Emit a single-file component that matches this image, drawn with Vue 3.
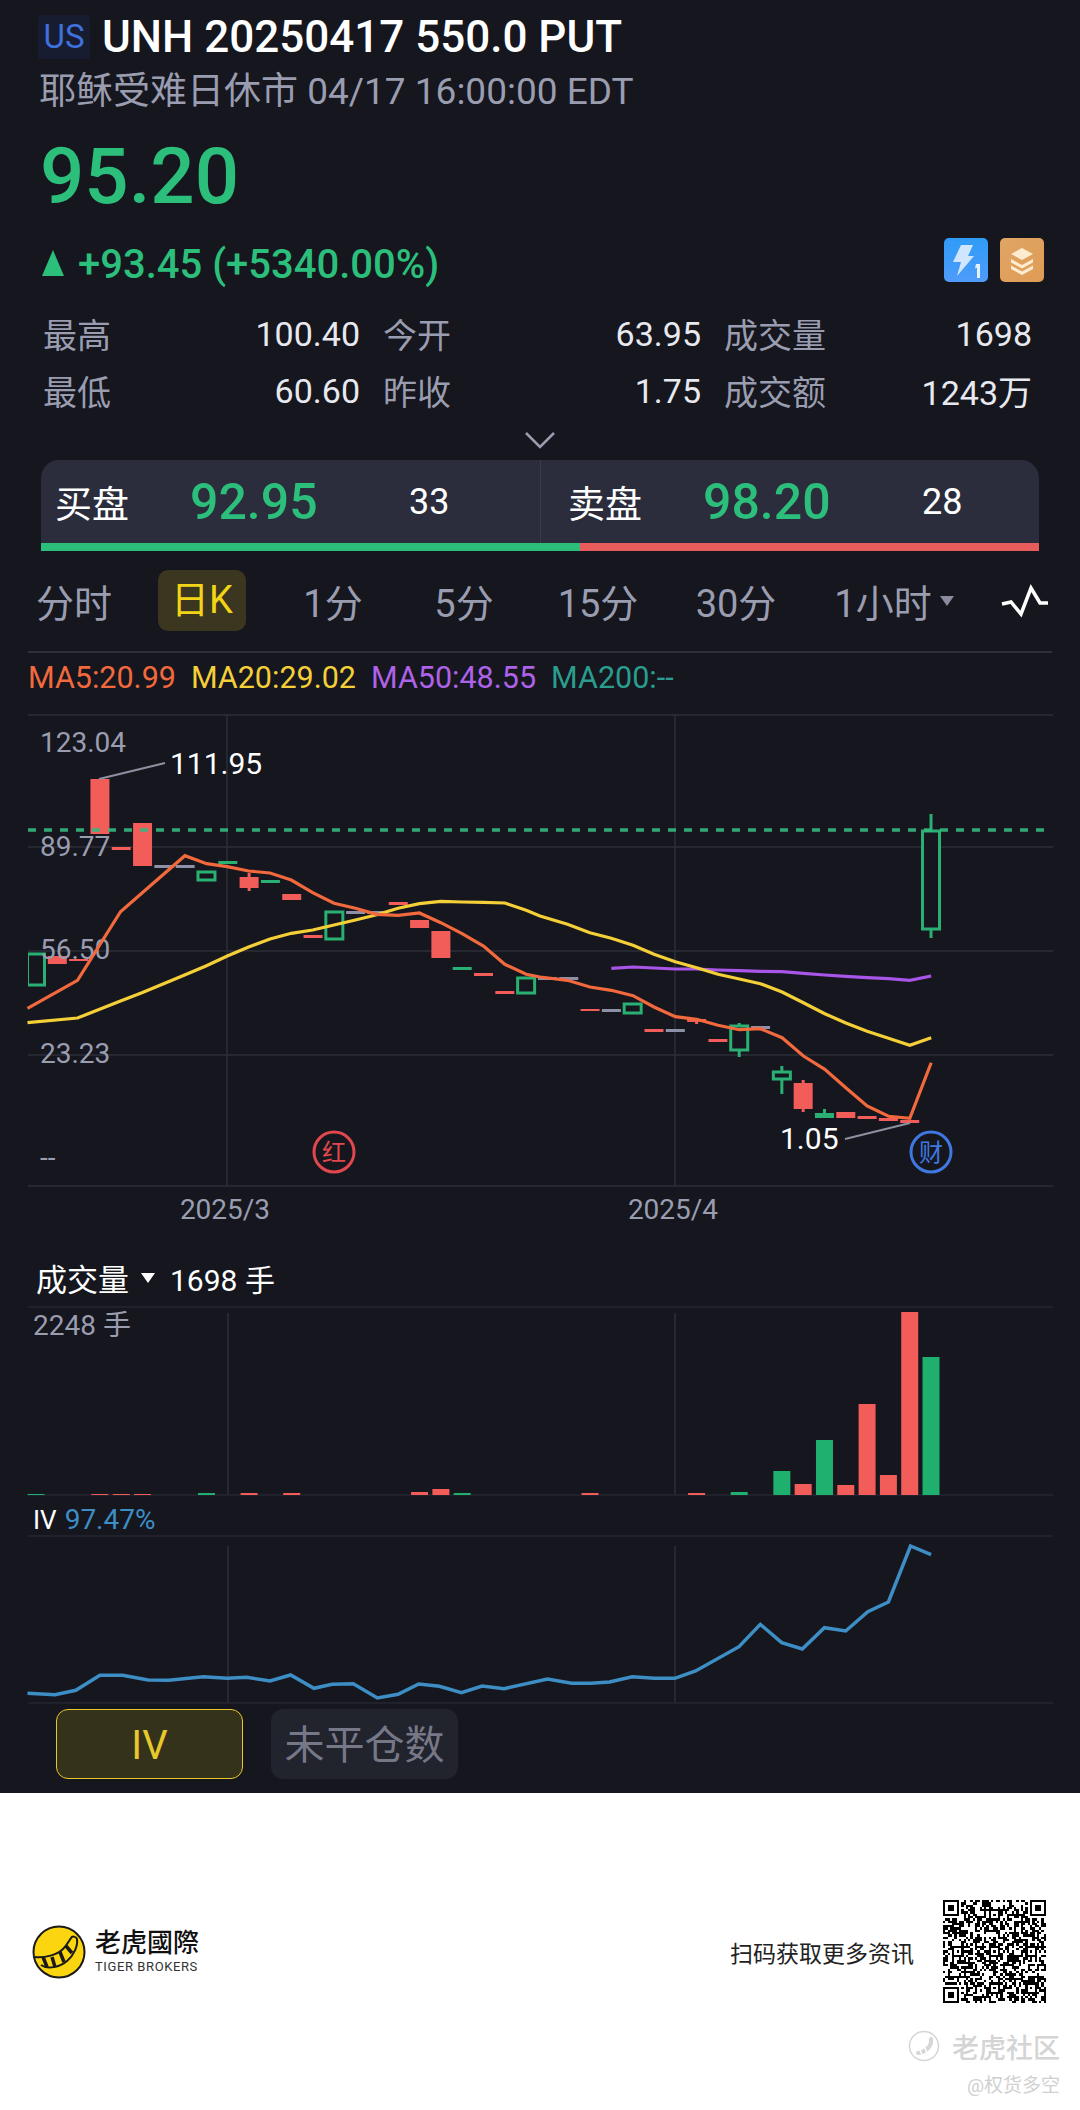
<template>
  <div class="page">
    <div class="dark">
      <!-- ---------- Header ---------- -->
      <div class="title-row">
        <span class="market">US</span>
        <span class="title">UNH 20250417 550.0 PUT</span>
      </div>
      <div class="sub">耶稣受难日休市 04/17 16:00:00 EDT</div>
      <div class="price">95.20</div>
      <div class="change-row">
        <span class="arrow"></span>
        <span class="change">+93.45 (+5340.00%)</span>
        <svg class="badge" width="44" height="44" viewBox="0 0 44 44">
          <defs>
            <linearGradient id="blueBadge" x1="0" y1="0" x2="0" y2="1">
              <stop offset="0" stop-color="#2f9cf6" />
              <stop offset="1" stop-color="#4f9bfb" />
            </linearGradient>
          </defs>
          <rect width="44" height="44" rx="5" fill="url(#blueBadge)" />
          <path d="M17 7H29L24 18H30L13 38L17 24H9Z" fill="#cfe6fd" />
          <path d="M32 26H36V40H33V29.5L31 30.5Z" fill="#e4f1fe" />
        </svg>
        <svg class="badge" width="44" height="44" viewBox="0 0 44 44">
          <defs>
            <linearGradient id="orangeBadge" x1="0" y1="0" x2="1" y2="1">
              <stop offset="0" stop-color="#e0a565" />
              <stop offset="1" stop-color="#df9c55" />
            </linearGradient>
          </defs>
          <rect width="44" height="44" rx="5" fill="url(#orangeBadge)" />
          <path d="M22 10L33 16L22 22L11 16Z" fill="#fdecd0" />
          <path d="M11 21L22 27L33 21V24.5L22 30.5L11 24.5Z" fill="#fdecd0" />
          <path d="M11 27.5L22 33.5L33 27.5V31L22 37L11 31Z" fill="#fdecd0" />
        </svg>
      </div>

      <div class="stats">
        <div v-for="s in stats" :key="s.label" class="stat">
          <span class="stat-label">{{ s.label }}</span>
          <span class="stat-value">{{ s.value }}</span>
        </div>
      </div>

      <div class="chevron">
        <svg width="32" height="18" viewBox="0 0 32 18">
          <path d="M2 2L16 16L30 2" fill="none" stroke="#9a9db0" stroke-width="2.5" />
        </svg>
      </div>

      <!-- ---------- Bid / ask ---------- -->
      <div class="book">
        <div class="book-rows">
          <div v-for="b in book" :key="b.label" class="book-half">
            <span class="book-label">{{ b.label }}</span>
            <span class="book-price">{{ b.price }}</span>
            <span class="book-qty">{{ b.qty }}</span>
          </div>
        </div>
        <div class="book-bar">
          <div class="bar-buy"></div>
          <div class="bar-sell"></div>
        </div>
      </div>

      <!-- ---------- Period tabs ---------- -->
      <div class="tabs">
        <div v-for="t in tabs" :key="t.label" class="tab">
          <span :class="{ 'tab-active': t.active }">{{ t.label }}</span>
          <span v-if="t.more" class="tab-more"></span>
        </div>
        <svg class="wave" width="52" height="34" viewBox="998 585 52 34">
          <path d="M1002 605L1011 603L1021 615L1031 589L1040 604L1048 604" fill="none" stroke="#fff" stroke-width="3.5" />
        </svg>
      </div>
      <div class="rule"></div>

      <div class="legend">
        <span class="ma5">MA5:20.99</span>
        <span class="ma20">MA20:29.02</span>
        <span class="ma50">MA50:48.55</span>
        <span class="ma200">MA200:--</span>
      </div>

      <!-- ---------- K line chart ---------- -->
      <svg class="chart" width="1080" height="532" viewBox="0 700 1080 532">
        <defs>
          <clipPath id="plotClip"><rect x="28" y="700" width="1030" height="500" /></clipPath>
        </defs>
        <line v-for="y in [714, 846, 950, 1054, 1185]" :key="y" x1="28" x2="1053" :y1="y" :y2="y" stroke="#2d2f39" stroke-width="1.5" />
        <line v-for="x in [227, 675]" :key="x" :x1="x" :x2="x" y1="714" y2="1185" stroke="#2d2f39" stroke-width="1.5" />

        <g clip-path="url(#plotClip)">
          <g v-for="c in candles" :key="c.i">
            <line v-if="c.wt" :x1="c.x" :x2="c.x" :y1="c.wt" :y2="c.wb" :stroke="c.color" stroke-width="3" />
            <rect v-if="c.hollow" :x="c.x - 8.5" :y="c.top" width="17" :height="c.h" fill="#15161e" :stroke="c.color" stroke-width="3" />
            <rect v-else :x="c.x - 9.5" :y="c.top" width="19" :height="c.h" :fill="c.color" />
          </g>
        </g>

        <line x1="28" x2="1044" y1="829" y2="829" stroke="#37b981" stroke-width="3.5" stroke-dasharray="8 8" opacity="0.9" />

        <text v-for="l in axis" :key="l.t" class="axis" x="40" :y="l.y">{{ l.t }}</text>

        <polyline :points="ma50" fill="none" stroke="#a855e8" stroke-width="3.2" />
        <polyline :points="ma20" fill="none" stroke="#f4cf38" stroke-width="3.2" />
        <polyline :points="ma5" fill="none" stroke="#f2693d" stroke-width="3.2" />

        <line x1="99" y1="778" x2="165" y2="762" stroke="#8e90a0" stroke-width="2" />
        <text class="mark" x="170" y="773">111.95</text>
        <line x1="845" y1="1138" x2="910" y2="1122" stroke="#8e90a0" stroke-width="2" />
        <text class="mark" x="780" y="1148">1.05</text>

        <circle cx="334" cy="1151" r="20" fill="none" stroke="#e0484d" stroke-width="3" />
        <text class="event event-red" x="334" y="1160">红</text>
        <circle cx="931" cy="1151" r="20" fill="none" stroke="#3f78e0" stroke-width="3" />
        <text class="event event-blue" x="931" y="1160">财</text>

        <text class="date" x="225" y="1218">2025/3</text>
        <text class="date" x="673" y="1218">2025/4</text>
      </svg>

      <!-- ---------- Volume ---------- -->
      <div class="vol-head">
        <span class="vol-label">成交量</span>
        <span class="vol-arrow"></span>
        <span class="vol-value">1698 手</span>
      </div>
      <svg class="chart" width="1080" height="200" viewBox="0 1305 1080 200">
        <line x1="28" x2="1053" y1="1306" y2="1306" stroke="#24262f" stroke-width="1.5" />
        <line x1="28" x2="1053" y1="1494" y2="1494" stroke="#24262f" stroke-width="1.5" />
        <line v-for="x in [228, 675]" :key="x" :x1="x" :x2="x" y1="1312" y2="1494" stroke="#2d2f39" stroke-width="1.5" />
        <rect v-for="b in volumes" :key="b.i" :x="b.x" :y="b.y" width="17" :height="b.h" :fill="b.color" />
        <text class="axis" x="33" y="1334">2248 手</text>
      </svg>

      <!-- ---------- IV ---------- -->
      <div class="iv-head"><span class="iv-label">IV</span><span class="iv-value">97.47%</span></div>
      <svg class="chart" width="1080" height="174" viewBox="0 1534 1080 174">
        <line x1="28" x2="1053" y1="1535" y2="1535" stroke="#24262f" stroke-width="1.5" />
        <line x1="28" x2="1053" y1="1702" y2="1702" stroke="#24262f" stroke-width="1.5" />
        <line v-for="x in [228, 675]" :key="x" :x1="x" :x2="x" y1="1545" y2="1702" stroke="#2d2f39" stroke-width="1.5" />
        <polyline :points="ivLine" fill="none" stroke="#3d8ec4" stroke-width="3.5" />
      </svg>

      <div class="switch">
        <div class="switch-btn switch-on">IV</div>
        <div class="switch-btn">未平仓数</div>
      </div>
    </div>

    <!-- ---------- Share footer ---------- -->
    <div class="footer">
      <div class="footer-row">
        <svg width="56" height="56" viewBox="0 0 56 56">
          <circle cx="28" cy="28" r="25.5" fill="#fbd50f" stroke="#1a1a1a" stroke-width="2" />
          <path d="M4 33C14 34 26 31 32 25C36 21 38 17 40 14C41 12 45 12 46 15C47 22 43 31 36 37C29 43 17 46 10 41" fill="#fbd50f" stroke="#1a1a1a" stroke-width="2" />
          <path d="M12 33L16 43M21 33L24 43M29 28L33 38M35 22L41 29" stroke="#1a1a1a" stroke-width="3.5" />
        </svg>
        <div class="brand">
          <div class="brand-cn">老虎國際</div>
          <div class="brand-en">TIGER BROKERS</div>
        </div>
        <span class="scan">扫码获取更多资讯</span>
        <svg class="qr" width="105" height="103" viewBox="0 0 45 45" shape-rendering="crispEdges">
          <path :d="qrPath" fill="#000" />
        </svg>
      </div>
      <div class="mark-row">
        <svg width="32" height="32" viewBox="0 0 32 32">
          <circle cx="16" cy="16" r="14.5" fill="none" stroke="#d6d6d6" stroke-width="1.5" />
          <path d="M23 9C24 16 18 22 10 23" fill="none" stroke="#d6d6d6" stroke-width="4" stroke-linecap="round" />
          <path d="M12 20L14 25M17 18L19 23" stroke="#fff" stroke-width="1.5" />
        </svg>
        <span class="mark-cn">老虎社区</span>
      </div>
      <div class="mark-user">@权货多空</div>
    </div>
  </div>
</template>

<script setup>
const RED = "#f25c59";
const GREEN = "#2bb074";
const GREY = "#8e90a8";

const stats = [
  { label: "最高", value: "100.40" },
  { label: "今开", value: "63.95" },
  { label: "成交量", value: "1698" },
  { label: "最低", value: "60.60" },
  { label: "昨收", value: "1.75" },
  { label: "成交额", value: "1243万" },
];

const book = [
  { label: "买盘", price: "92.95", qty: "33" },
  { label: "卖盘", price: "98.20", qty: "28" },
];

const tabs = [
  { label: "分时" },
  { label: "日K", active: true },
  { label: "1分" },
  { label: "5分" },
  { label: "15分" },
  { label: "30分" },
  { label: "1小时", more: true },
];

const axis = [
  { t: "123.04", y: 751 },
  { t: "89.77", y: 855 },
  { t: "56.50", y: 958 },
  { t: "23.23", y: 1062 },
  { t: "--", y: 1166 },
];

// candle x position from its index
const cx = (i) => 36 + 21.31 * i;

// [index, kind, top, bottom, wickTop, wickBottom]
// kind: r = filled red, g = filled green, h = hollow green, d = grey doji
const rawCandles = [
  [0, "h", 953, 984], [1, "r", 955, 963], [2, "r", 958, 960], [3, "r", 778, 833],
  [4, "r", 846, 849], [5, "r", 822, 865], [6, "d", 864, 867], [7, "d", 864, 867],
  [8, "h", 871, 879], [9, "g", 860, 863], [10, "r", 876, 887, 872, 890], [11, "g", 879, 882],
  [12, "r", 893, 899], [13, "r", 934, 937], [14, "h", 911, 938], [15, "d", 910, 913],
  [16, "d", 910, 913], [17, "r", 901, 904], [18, "r", 919, 927], [19, "r", 930, 957],
  [20, "g", 966, 969], [21, "r", 972, 975], [22, "r", 990, 993], [23, "h", 977, 992],
  [24, "d", 976, 979], [25, "d", 976, 979], [26, "r", 1008, 1010], [27, "d", 1008, 1011],
  [28, "h", 1003, 1012], [29, "r", 1028, 1031], [30, "d", 1028, 1031], [31, "r", 1018, 1021, 1018, 1023],
  [32, "r", 1038, 1041], [33, "h", 1025, 1049, 1022, 1056], [34, "d", 1025, 1028],
  [35, "h", 1071, 1078, 1065, 1093], [36, "r", 1082, 1108, 1079, 1111], [37, "g", 1112, 1117, 1108, 1117],
  [38, "r", 1111, 1117], [39, "r", 1115, 1118], [40, "r", 1117, 1120], [41, "r", 1119, 1122],
  [42, "h", 830, 928, 813, 937],
];

const kindColor = { r: RED, g: GREEN, h: GREEN, d: GREY };

const candles = rawCandles.map(([i, kind, top, bottom, wt, wb]) => ({
  i,
  x: cx(i),
  top,
  h: bottom - top,
  wt,
  wb,
  hollow: kind === "h",
  color: kindColor[kind],
}));

// Averages were read off two half-width crops, so each half has its own x origin
const left = (pts) => pts.map(([x, y]) => `${(x / 2.904).toFixed(1)},${(700 + y / 3).toFixed(1)}`).join(" ");
const right = (pts) => pts.map(([x, y]) => `${(540 + x / 2.904).toFixed(1)},${(700 + y / 3).toFixed(1)}`).join(" ");

const ma5 =
  left([[80, 922], [225, 838], [350, 632], [425, 565], [537, 464], [600, 488], [660, 497], [722, 510], [784, 516], [846, 537], [908, 575], [970, 607], [1032, 622], [1094, 640], [1156, 643], [1218, 636], [1280, 665], [1342, 698], [1404, 735], [1466, 790], [1528, 820]]) +
  " " +
  right([[0, 828], [80, 838], [145, 858], [207, 868], [270, 884], [331, 918], [393, 947], [455, 955], [517, 973], [579, 986], [640, 983], [703, 1010], [765, 1065], [827, 1105], [888, 1160], [950, 1215], [1012, 1246], [1074, 1252], [1136, 1085]]);

const ma20 =
  left([[80, 965], [225, 951], [350, 900], [412, 875], [475, 848], [536, 822], [598, 795], [660, 765], [722, 738], [784, 714], [846, 697], [908, 687], [970, 672], [1032, 657], [1094, 641], [1156, 622], [1218, 608], [1280, 601], [1342, 603], [1404, 604], [1466, 606], [1528, 628]]) +
  " " +
  right([[0, 645], [80, 670], [145, 695], [207, 712], [270, 733], [331, 760], [393, 782], [455, 800], [517, 820], [579, 834], [640, 848], [703, 873], [765, 905], [827, 938], [888, 966], [950, 991], [1012, 1012], [1074, 1033], [1136, 1010]]);

const ma50 = right([[207, 802], [270, 798], [331, 801], [393, 804], [455, 804], [517, 807], [579, 809], [640, 811], [703, 812], [765, 817], [827, 822], [888, 826], [950, 830], [1012, 833], [1074, 838], [1136, 825]]);

const volumes = [
  [0, "g", 1493], [3, "r", 1493], [4, "r", 1493], [5, "r", 1493],
  [8, "g", 1492], [10, "r", 1492], [12, "r", 1492], [18, "r", 1491], [19, "r", 1488],
  [20, "g", 1492], [26, "r", 1492], [31, "r", 1492], [33, "g", 1491],
  [35, "g", 1470], [36, "r", 1483], [37, "g", 1439], [38, "r", 1484],
  [39, "r", 1403], [40, "r", 1474], [41, "r", 1311], [42, "g", 1356],
].map(([i, kind, y]) => ({
  i,
  x: cx(i) - 8.5,
  y,
  h: 1494 - y,
  color: kind === "r" ? RED : "#1fb06f",
}));

const ivLine = [[40, 1357], [80, 1361], [110, 1348], [145, 1303], [178, 1303], [215, 1317], [245, 1318], [295, 1307], [330, 1312], [358, 1309], [392, 1320], [422, 1302], [456, 1342], [482, 1330], [513, 1328], [548, 1371], [578, 1360], [608, 1329], [638, 1336], [670, 1355], [700, 1335], [732, 1343], [795, 1314], [830, 1327], [858, 1327], [885, 1323], [918, 1307], [950, 1312], [980, 1312], [1010, 1290], [1073, 1217], [1104, 1150], [1135, 1205], [1165, 1224], [1197, 1160], [1228, 1170], [1260, 1112], [1290, 1083], [1322, 915], [1352, 941]]
  .map(([x, y]) => `${(x / 1.452).toFixed(1)},${(1240 + y / 3).toFixed(1)}`)
  .join(" ");

// QR modules: finder and alignment squares, filler from a small LFSR
function buildQr() {
  const size = 45;
  let seed = 0xace1;
  const next = () => {
    let bit = 0;
    for (let k = 0; k < 3; k++) {
      bit = (seed ^ (seed >> 2) ^ (seed >> 3) ^ (seed >> 5)) & 1;
      seed = (seed >> 1) | (bit << 15);
    }
    return seed & 1;
  };
  const finder = (r, c, x, y) => {
    const a = r - y;
    const b = c - x;
    if (a < -1 || b < -1 || a > 7 || b > 7) return null;
    if (a < 0 || b < 0 || a > 6 || b > 6) return 0;
    if (a === 0 || b === 0 || a === 6 || b === 6) return 1;
    return a >= 2 && a <= 4 && b >= 2 && b <= 4 ? 1 : 0;
  };
  const align = (r, c) => {
    for (const y of [6, 22, 38]) {
      for (const x of [6, 22, 38]) {
        if ((y === 6 && x !== 22) || (x === 6 && y !== 22)) continue;
        const dist = Math.max(Math.abs(r - y), Math.abs(c - x));
        if (dist <= 2) return dist === 1 ? 0 : 1;
      }
    }
    return null;
  };
  let d = "";
  for (let r = 0; r < size; r++) {
    for (let c = 0; c < size; c++) {
      const fixed = finder(r, c, 0, 0) ?? finder(r, c, 38, 0) ?? finder(r, c, 0, 38) ?? align(r, c);
      const on = fixed === null ? next() : fixed;
      if (on) d += `M${c} ${r}h1v1h-1z`;
    }
  }
  return d;
}
const qrPath = buildQr();
</script>

<style>
html,
body {
  margin: 0;
  background: #fff;
}
</style>

<style scoped>
.page {
  width: 1080px;
  height: 2110px;
  font-family: Roboto, "Noto Sans CJK SC", sans-serif;
  overflow: hidden;
}

.dark {
  height: 1793px;
  background: #15161e;
  padding-top: 15px;
  box-sizing: border-box;
  color: #9a9db0;
}

.title-row {
  display: flex;
  align-items: center;
  height: 44px;
  padding-left: 38px;
  gap: 12px;
}

.market {
  width: 52px;
  height: 44px;
  line-height: 44px;
  text-align: center;
  background: #171c30;
  color: #3f70dc;
  font-size: 33px;
  border-radius: 3px;
}

.title {
  color: #fff;
  font-size: 44px;
  font-weight: 500;
}

.sub {
  margin-top: 14px;
  height: 36px;
  line-height: 38px;
  padding-left: 39px;
  font-size: 37px;
  white-space: nowrap;
}

.price {
  margin-top: 23px;
  height: 90px;
  line-height: 90px;
  padding-left: 40px;
  font-size: 78px;
  font-weight: 500;
  color: #2cbf7b;
}

.change-row {
  display: flex;
  align-items: center;
  margin-top: 15px;
  height: 46px;
  padding: 0 36px 0 42px;
  color: #2cbf7b;
}

.arrow {
  width: 0;
  height: 0;
  border-left: 11px solid transparent;
  border-right: 11px solid transparent;
  border-bottom: 26px solid #2cbf7b;
  margin-top: 6px;
}

.change {
  margin-left: 14px;
  margin-top: 8px;
  font-size: 40px;
  font-weight: 500;
  flex: 1;
}

.badge {
  margin-left: 12px;
}

.stats {
  display: grid;
  grid-template-columns: 317px 318px 308px;
  column-gap: 23px;
  margin-top: 22px;
  padding-left: 43px;
}

.stat {
  display: flex;
  justify-content: space-between;
  align-items: center;
  height: 57px;
  font-size: 34px;
}

.stat-value {
  color: #e8e9ef;
}

.chevron {
  display: flex;
  justify-content: center;
  align-items: center;
  height: 41px;
}

.book {
  margin: 0 41px;
}

.book-rows {
  display: grid;
  grid-template-columns: 1fr 1fr;
  height: 83px;
  background: #2b2d3c;
  border-radius: 18px 18px 0 0;
}

.book-half {
  display: flex;
  align-items: center;
  padding-left: 14px;
}

.book-half + .book-half {
  padding-left: 27px;
  border-left: 1px solid #3a3c4b;
}

.book-label {
  width: 135px;
  font-size: 37px;
  color: #fff;
}

.book-price {
  width: 219px;
  font-size: 50px;
  font-weight: 500;
  color: #2cbf7b;
}

.book-qty {
  font-size: 36px;
  color: #fff;
}

.book-bar {
  display: flex;
  height: 8px;
}

.bar-buy {
  width: 539px;
  background: #2cbf7b;
}

.bar-sell {
  flex: 1;
  background: #e85c5c;
}

.tabs {
  display: grid;
  grid-template-columns: 130px 126px 136px 126px 142px 134px 182px 52px;
  margin-top: 19px;
  height: 61px;
  padding-left: 9px;
  align-items: center;
  font-size: 38px;
}

.tab {
  display: flex;
  justify-content: center;
  align-items: center;
}

.tab-active {
  display: block;
  width: 88px;
  height: 61px;
  line-height: 61px;
  text-align: center;
  background: #3a3620;
  color: #f2d416;
  border-radius: 10px;
}

.tab-more {
  width: 0;
  height: 0;
  margin-left: 8px;
  border-left: 7px solid transparent;
  border-right: 7px solid transparent;
  border-top: 10px solid #8a8c9e;
}

.wave {
  justify-self: start;
  margin-left: 13px;
}

.rule {
  margin: 20px 28px 0;
  height: 2px;
  background: #2d2f39;
}

.legend {
  display: flex;
  gap: 15px;
  align-items: center;
  height: 46px;
  padding-left: 28px;
  font-size: 30.5px;
  margin-top: 1px;
  margin-bottom: 1px;
  box-sizing: border-box;
}

.ma5 { color: #f2693d; }
.ma20 { color: #f4cf38; }
.ma50 { color: #ae62e8; }
.ma200 { color: #2a9d8f; }

.chart {
  display: block;
}

.axis {
  font-size: 28px;
  fill: #9a9db0;
}

.mark {
  font-size: 30px;
  fill: #fff;
}

.event {
  font-size: 24px;
  text-anchor: middle;
}

.event-red { fill: #e0484d; }
.event-blue { fill: #3f78e0; }

.date {
  font-size: 28px;
  fill: #9a9db0;
  text-anchor: middle;
}

.vol-head {
  display: flex;
  align-items: center;
  height: 73px;
  padding: 16px 0 0 36px;
  box-sizing: border-box;
  color: #fff;
}

.vol-label {
  font-size: 31px;
}

.vol-arrow {
  width: 0;
  height: 0;
  margin: 0 15px 0 12px;
  border-left: 7px solid transparent;
  border-right: 7px solid transparent;
  border-top: 10px solid #fff;
}

.vol-value {
  font-size: 30px;
}

.iv-head {
  display: flex;
  gap: 8px;
  align-items: center;
  height: 27px;
  padding: 0 0 2px 33px;
  font-size: 28px;
}

.iv-label {
  color: #fff;
  font-size: 26px;
}

.iv-value {
  color: #3d8ec4;
}

.switch {
  display: flex;
  gap: 28px;
  padding-left: 56px;
}

.switch-btn {
  width: 187px;
  height: 70px;
  line-height: 74px;
  text-align: center;
  font-size: 40px;
  color: #767888;
  background: #21232d;
  border-radius: 12px;
  box-sizing: border-box;
}

.switch-on {
  line-height: 72px;
  color: #e8c92c;
  background: #35321c;
  border: 1.5px solid #e8c92c;
}

.footer {
  height: 317px;
  background: #fff;
  padding-top: 107px;
  box-sizing: border-box;
}

.footer-row {
  display: flex;
  align-items: center;
  height: 103px;
  padding: 0 33px 0 31px;
}

.brand {
  margin-left: 8px;
  flex: 1;
}

.brand-cn {
  font-size: 26px;
  line-height: 30px;
  font-weight: 500;
  color: #111;
}

.brand-en {
  font-size: 13px;
  line-height: 18px;
  letter-spacing: 0.6px;
  color: #333;
}

.scan {
  font-size: 23px;
  color: #222;
  margin-right: 28px;
}

.mark-row {
  display: flex;
  justify-content: flex-end;
  align-items: center;
  gap: 12px;
  margin-top: 28px;
  padding-right: 20px;
  height: 30px;
}

.mark-cn {
  font-size: 27px;
  font-weight: 500;
  color: #d4d4d4;
}

.mark-user {
  margin-top: 13px;
  height: 24px;
  line-height: 24px;
  padding-right: 20px;
  text-align: right;
  font-size: 19px;
  color: #d0d0d0;
}
</style>
